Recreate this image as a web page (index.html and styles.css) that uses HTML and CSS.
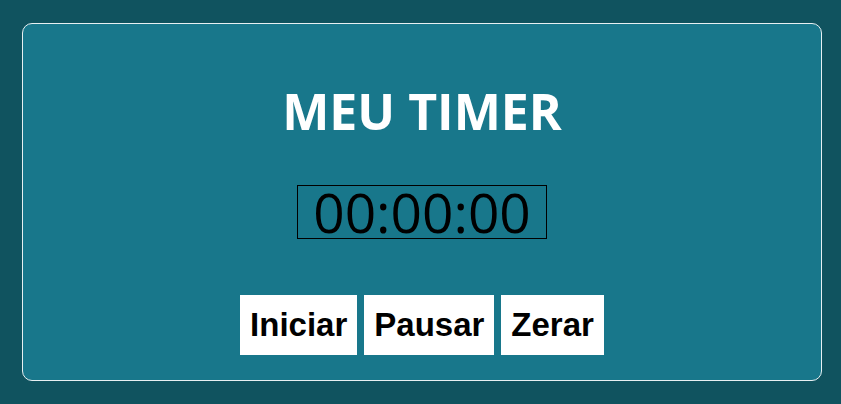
FILE: index.html
```html
<!DOCTYPE html>
<html lang="pt-BR">
<head>
<meta charset="utf-8">
<title>Meu Timer</title>
<link rel="stylesheet" href="styles.css">
</head>
<body>
<main class="card">
  <h1 class="title">MEU TIMER</h1>
  <div class="display">00:00:00</div>
  <div class="controls">
    <button class="btn">Iniciar</button>
    <button class="btn">Pausar</button>
    <button class="btn">Zerar</button>
  </div>
</main>
</body>
</html>
```
FILE: styles.css
```css
html, body {
  margin: 0;
  padding: 0;
}
body {
  background: #10535f;
  padding: 23px 19px 23px 22px;
  font-family: "Open Sans", sans-serif;
}
.card {
  box-sizing: border-box;
  width: 800px;
  height: 358px;
  border: 1px solid #e8f0f2;
  border-radius: 10px;
  background: #18778b;
  display: flex;
  flex-direction: column;
  align-items: center;
  padding-top: 69px;
}
.title {
  margin: 0;
  color: #ffffff;
  font-family: "Open Sans", sans-serif;
  font-weight: 700;
  font-size: 50px;
  line-height: 36px;
}
.display {
  margin-top: 56px;
  border: 1px solid #000;
  padding: 0 15px;
  font-family: "Open Sans", sans-serif;
  font-size: 55px;
  line-height: 52px;
  color: #000;
}
.controls {
  margin-top: 56px;
  display: flex;
  gap: 7px;
}
.btn {
  border: none;
  background: #fff;
  color: #000;
  font-family: "Liberation Sans", Arial, sans-serif;
  font-weight: 700;
  font-size: 33px;
  height: 60px;
  padding: 0 10px;
  margin: 0;
}
```
